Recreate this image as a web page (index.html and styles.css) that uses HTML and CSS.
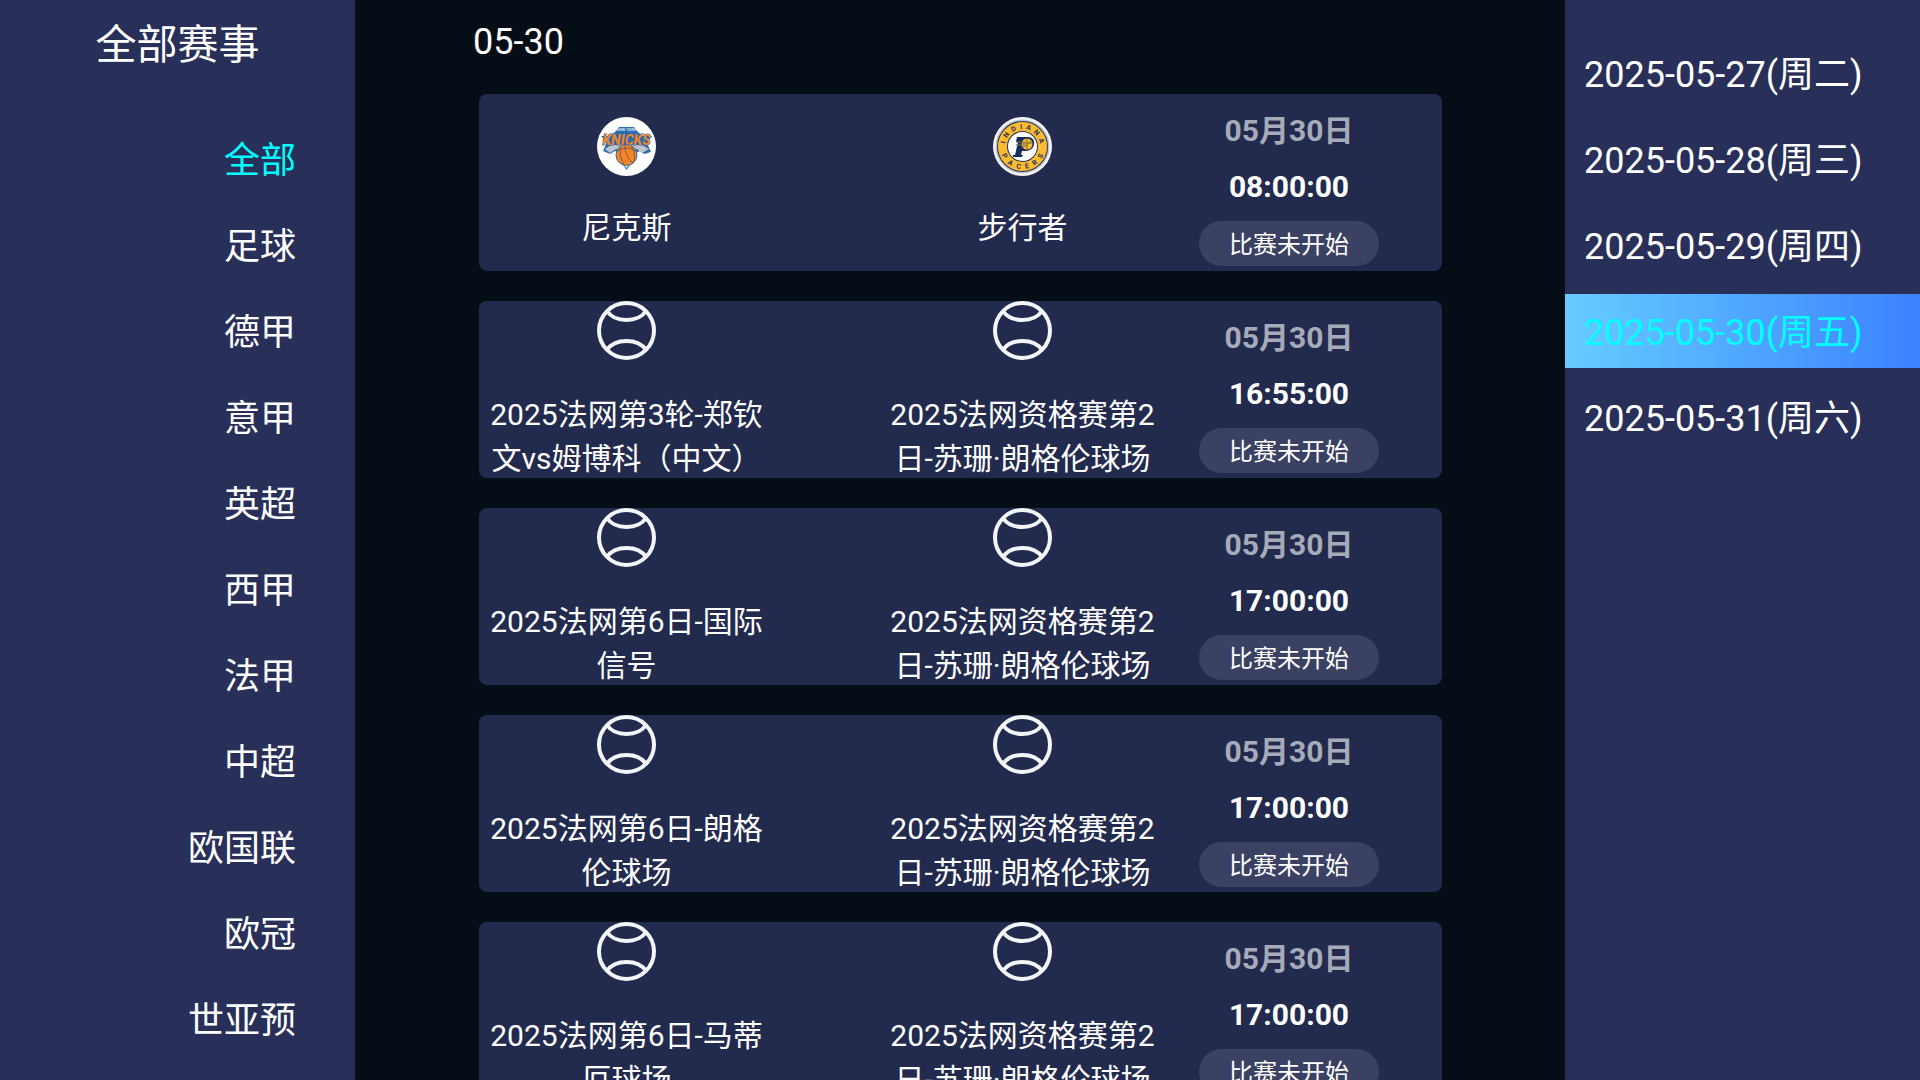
FILE: index.html
```html
<!DOCTYPE html>
<html lang="zh-CN">

<head>
    <meta charset="UTF-8">
    <meta name="viewport" content="width=device-width, initial-scale=1.0">
    <link rel="stylesheet" href="styles.css">
    <title>全部赛事</title>
</head>

<body>
    <!-- shared ball icon -->
    <svg class="defs" width="0" height="0">
        <symbol id="ball" viewBox="0 0 59 59">
            <g fill="none" stroke="#f4f5f8" stroke-width="4">
                <circle cx="29.5" cy="29.5" r="27.5" />
                <path d="M10 10 Q16 19 29.5 19 Q43 19 49 10" />
                <path d="M10 49 Q16 40 29.5 40 Q43 40 49 49" />
            </g>
        </symbol>
    </svg>

    <div class="page">
        <nav class="side">
            <h1>全部赛事</h1>
            <a class="item active" href="#">全部</a>
            <a class="item" href="#">足球</a>
            <a class="item" href="#">德甲</a>
            <a class="item" href="#">意甲</a>
            <a class="item" href="#">英超</a>
            <a class="item" href="#">西甲</a>
            <a class="item" href="#">法甲</a>
            <a class="item" href="#">中超</a>
            <a class="item" href="#">欧国联</a>
            <a class="item" href="#">欧冠</a>
            <a class="item" href="#">世亚预</a>
        </nav>

        <main class="main">
            <h2>05-30</h2>
            <div class="list">
                <div class="card">
                    <div class="team club">
                        <svg class="logo" viewBox="0 0 59 59">
                            <circle cx="29.5" cy="29.5" r="29.5" fill="#fff" />
                            <path d="M4 19h9l5-4 4-5h15l4 5 5 4h9l-5 7 4 9-7 2-4-3-6 3H24l-6-3-5 3-7-3 4-9z" fill="#2d6cae" />
                            <path d="M8 32l6-4h31l7 4-7 4-5-4H19l-6 4z" fill="#bfc5cb" />
                            <path d="M23 43l6.5 10 7-10z" fill="#2d6cae" />
                            <path d="M27 48l2.500 3 2.500-3z" fill="#fff" />
                            <text class="knicks-top" x="29.5" y="14">NEW YORK</text>
                            <text class="knicks" x="29.5" y="28">KNICKS</text>
                            <circle cx="29.5" cy="38" r="10.5" fill="#f58426" stroke="#2d6cae" />
                            <path d="M20 34q10-6 19 0M23 30q-1 10 4 18M28 28q0 12 8 18M34 29q5 6 3 16" fill="none" stroke="#7a6152" stroke-width="1" />
                        </svg>
                        <p>尼克斯</p>
                    </div>
                    <div class="team club">
                        <svg class="logo" viewBox="0 0 59 59">
                            <defs>
                                <path id="arcTop" d="M12 29.5a17.5 17.5 0 0 1 35 0" />
                                <path id="arcBottom" d="M7 29.5a22.5 22.5 0 0 0 45 0" />
                            </defs>
                            <circle cx="29.5" cy="29.5" r="29.5" fill="#f5f5f7" />
                            <circle cx="29.5" cy="29.5" r="26" fill="#fff" stroke="#c3c6d0" stroke-width="2" />
                            <circle cx="29.5" cy="29.5" r="20" fill="#fff" stroke="#24335c" stroke-width="11" />
                            <circle cx="29.5" cy="29.5" r="20" fill="none" stroke="#fdbb30" stroke-width="9" />
                            <text class="pacers"><textPath href="#arcTop" startOffset="50%">I&nbsp;&nbsp;N&nbsp;&nbsp;D&nbsp;&nbsp;I&nbsp;&nbsp;A&nbsp;&nbsp;N&nbsp;&nbsp;A</textPath></text>
                            <text class="pacers"><textPath href="#arcBottom" startOffset="50%">P&nbsp;&nbsp;&nbsp;A&nbsp;&nbsp;&nbsp;C&nbsp;&nbsp;&nbsp;E&nbsp;&nbsp;&nbsp;R&nbsp;&nbsp;&nbsp;S</textPath></text>
                            <path d="M24 20h12q6 1 5 8-2 6-9 6h-3l-1 4h2l-1 2H20v-2h2l3-13h-2z" fill="#152c5c" />
                            <circle cx="34" cy="27" r="5.5" fill="#fdbb30" />
                            <path d="M23 25h9M23 28h9M29 26h10M34 22v11M30 30q5-2 8-6" fill="none" stroke="#7d6b43" />
                        </svg>
                        <p>步行者</p>
                    </div>
                    <div class="info">
                        <span class="date">05月30日</span>
                        <span class="time">08:00:00</span>
                        <button class="status">比赛未开始</button>
                    </div>
                </div>

                <div class="card">
                    <div class="team">
                        <svg class="logo"><use href="#ball" /></svg>
                        <p>2025法网第3轮-郑钦文vs姆博科（中文）</p>
                    </div>
                    <div class="team">
                        <svg class="logo"><use href="#ball" /></svg>
                        <p>2025法网资格赛第2日-苏珊·朗格伦球场</p>
                    </div>
                    <div class="info">
                        <span class="date">05月30日</span>
                        <span class="time">16:55:00</span>
                        <button class="status">比赛未开始</button>
                    </div>
                </div>

                <div class="card">
                    <div class="team">
                        <svg class="logo"><use href="#ball" /></svg>
                        <p>2025法网第6日-国际信号</p>
                    </div>
                    <div class="team">
                        <svg class="logo"><use href="#ball" /></svg>
                        <p>2025法网资格赛第2日-苏珊·朗格伦球场</p>
                    </div>
                    <div class="info">
                        <span class="date">05月30日</span>
                        <span class="time">17:00:00</span>
                        <button class="status">比赛未开始</button>
                    </div>
                </div>

                <div class="card">
                    <div class="team">
                        <svg class="logo"><use href="#ball" /></svg>
                        <p>2025法网第6日-朗格伦球场</p>
                    </div>
                    <div class="team">
                        <svg class="logo"><use href="#ball" /></svg>
                        <p>2025法网资格赛第2日-苏珊·朗格伦球场</p>
                    </div>
                    <div class="info">
                        <span class="date">05月30日</span>
                        <span class="time">17:00:00</span>
                        <button class="status">比赛未开始</button>
                    </div>
                </div>

                <div class="card">
                    <div class="team">
                        <svg class="logo"><use href="#ball" /></svg>
                        <p>2025法网第6日-马蒂厄球场</p>
                    </div>
                    <div class="team">
                        <svg class="logo"><use href="#ball" /></svg>
                        <p>2025法网资格赛第2日-苏珊·朗格伦球场</p>
                    </div>
                    <div class="info">
                        <span class="date">05月30日</span>
                        <span class="time">17:00:00</span>
                        <button class="status">比赛未开始</button>
                    </div>
                </div>
            </div>
        </main>

        <nav class="side days">
            <a class="item" href="#">2025-05-27(周二)</a>
            <a class="item" href="#">2025-05-28(周三)</a>
            <a class="item" href="#">2025-05-29(周四)</a>
            <a class="item active" href="#">2025-05-30(周五)</a>
            <a class="item" href="#">2025-05-31(周六)</a>
        </nav>
    </div>
</body>

</html>
```
FILE: styles.css
```css
* {
    box-sizing: border-box;
}

body {
    margin: 0;
    background-color: #050d17;
    color: white;
    font-family: Roboto, "Noto Sans CJK SC", sans-serif;
}

h1, h2, p {
    margin: 0;
    font-weight: normal;
}

.defs {
    display: block;
}

.page {
    display: flex;
    height: 100vh;
    overflow: hidden;
}

.side {
    display: flex;
    flex-direction: column;
    flex-shrink: 0;
    gap: 12px;
    width: 355px;
    background-color: #282f59;
}

.side h1 {
    height: 110px;
    padding-top: 14px;
    font-size: 41px;
    line-height: 62px;
    text-align: center;
}

.item {
    flex-shrink: 0;
    padding: 4px 59px 0 0;
    color: white;
    font-size: 36px;
    line-height: 70px;
    text-align: right;
    text-decoration: none;
}

.item.active {
    color: cyan;
}

.days {
    padding-top: 36px;
}

.days .item {
    padding: 4px 0 0 19px;
    text-align: left;
}

.days .active {
    background: linear-gradient(to right, #66ccff, #3b82ff);
}

.main {
    flex: 1;
    min-width: 0;
    padding: 0 123px 0 118px;
}

.main h2 {
    height: 94px;
    font-size: 36px;
    line-height: 84px;
}

.list {
    display: flex;
    flex-direction: column;
    gap: 30px;
    padding-left: 6px;
}

.card {
    display: flex;
    height: 177px;
    padding: 0 63px 0 3px;
    border-radius: 8px;
    background-color: #222a4e;
    overflow: hidden;
}

.team {
    display: flex;
    flex-direction: column;
    align-items: center;
    gap: 33px;
    width: 289px;
}

.team + .team {
    margin-left: 107px;
}

.club {
    justify-content: center;
    gap: 30px;
    padding-top: 2px;
}

.logo {
    flex-shrink: 0;
    width: 59px;
    height: 59px;
}

.team p {
    font-size: 30px;
    line-height: 44px;
    text-align: center;
}

.info {
    display: flex;
    flex-direction: column;
    align-items: center;
    margin-left: auto;
    padding-top: 9px;
    font-size: 30px;
    font-weight: bold;
    line-height: 56px;
}

.date {
    color: #a7aab8;
}

.status {
    width: 180px;
    height: 45px;
    margin-top: 6px;
    padding: 0 0 2px;
    border: none;
    border-radius: 23px;
    background-color: #3b4162;
    color: white;
    font-family: inherit;
    font-size: 24px;
}

/* lettering inside the team badges */
.knicks {
    fill: #f58426;
    stroke: #2d6cae;
    stroke-width: 1px;
    paint-order: stroke;
    font-size: 14px;
    font-weight: bold;
    font-style: italic;
    text-anchor: middle;
}

.knicks-top {
    fill: #d5e4f0;
    font-size: 4px;
    font-weight: bold;
    text-anchor: middle;
}

.pacers {
    fill: #24335c;
    font-size: 7px;
    font-weight: bold;
    text-anchor: middle;
}
```
